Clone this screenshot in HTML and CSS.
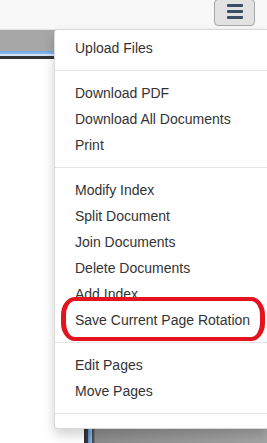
FILE: index.html
```html
<!DOCTYPE html>
<html lang="en">
<head>
    <meta charset="UTF-8">
    <meta name="viewport" content="width=device-width, initial-scale=1.0">
    <title>Document Viewer</title>
    <link rel="stylesheet" href="styles.css">
</head>
<body>
    <nav class="navbar">
        <button class="menu-toggle" aria-label="Menu">
            <span class="bar"></span>
            <span class="bar"></span>
            <span class="bar"></span>
        </button>
    </nav>

    <!-- viewer frame -->
    <div class="viewer-top"></div>
    <div class="workspace">
        <div class="page"></div>
    </div>

    <!-- dropdown menu -->
    <ul class="dropdown-menu">
        <li><a href="#">Upload Files</a></li>
        <li class="divider"></li>
        <li><a href="#">Download PDF</a></li>
        <li><a href="#">Download All Documents</a></li>
        <li><a href="#">Print</a></li>
        <li class="divider"></li>
        <li><a href="#">Modify Index</a></li>
        <li><a href="#">Split Document</a></li>
        <li><a href="#">Join Documents</a></li>
        <li><a href="#">Delete Documents</a></li>
        <li><a href="#">Add Index</a></li>
        <li><a href="#">Save Current Page Rotation</a></li>
        <li class="divider"></li>
        <li><a href="#">Edit Pages</a></li>
        <li><a href="#">Move Pages</a></li>
        <li class="divider"></li>
    </ul>

    <div class="highlight"></div>
</body>
</html>
```

FILE: styles.css
```css
* {
    margin: 0;
    padding: 0;
    box-sizing: border-box;
}

body {
    font-family: 'Liberation Sans', Arial, sans-serif;
    font-size: 14px;
    color: #333;
    background: #fff;
    overflow: hidden;
    height: 443px;
    position: relative;
}

.navbar {
    height: 30px;
    background: #f8f8f8;
    border-bottom: 1px solid #e4e4e4;
    display: flex;
    justify-content: flex-end;
    padding-right: 12px;
}

.menu-toggle {
    width: 41px;
    height: 27px;
    margin-top: -1px;
    background: #e2e2e2;
    border: 1px solid #a8a8a8;
    border-radius: 4px;
    display: flex;
    flex-direction: column;
    align-items: center;
    gap: 3px;
    padding-top: 4px;
}

.bar {
    display: block;
    width: 16px;
    height: 3px;
    background: #3c4d69;
    border-radius: 1px;
}

.viewer-top {
    height: 30px;
    background: linear-gradient(to bottom,
        #a7a7a7 0, #a7a7a7 21px,
        #6ea6e2 21px, #8dbbec 24px,
        #cfe2f6 24px, #cfe2f6 26px,
        #333 26px, #333 29px,
        #fff 29px);
}

.workspace {
    padding-left: 84px;
}

.page {
    margin-top: 320px;
    height: 63px;
    background: linear-gradient(to right,
        #2e2e2e 0, #3a3a3a 4px,
        #5d8fcf 4px, #8bbcec 8px,
        #444 8px, #5a5a5a 10px,
        #8c8c8c 11px, #a4a4a4 100%);
}

.dropdown-menu {
    position: absolute;
    top: 29px;
    left: 54px;
    width: 213px;
    list-style: none;
    background: #fff;
    border: 1px solid rgba(0, 0, 0, 0.15);
    border-right: 0;
    border-radius: 4px 0 0 4px;
    box-shadow: 0 6px 12px rgba(0, 0, 0, 0.175);
    padding: 5px 0;
}

.dropdown-menu a {
    display: block;
    padding: 3px 20px;
    line-height: 20px;
    color: #333;
    text-decoration: none;
    white-space: nowrap;
}

.dropdown-menu .divider {
    height: 1px;
    margin: 9px 0;
    background: #e5e5e5;
}

.highlight {
    position: absolute;
    left: 61px;
    top: 297px;
    width: 204px;
    height: 44px;
    border: 5px solid #e3141f;
    border-width: 4px 5px;
    border-radius: 14px / 18px;
}
```
